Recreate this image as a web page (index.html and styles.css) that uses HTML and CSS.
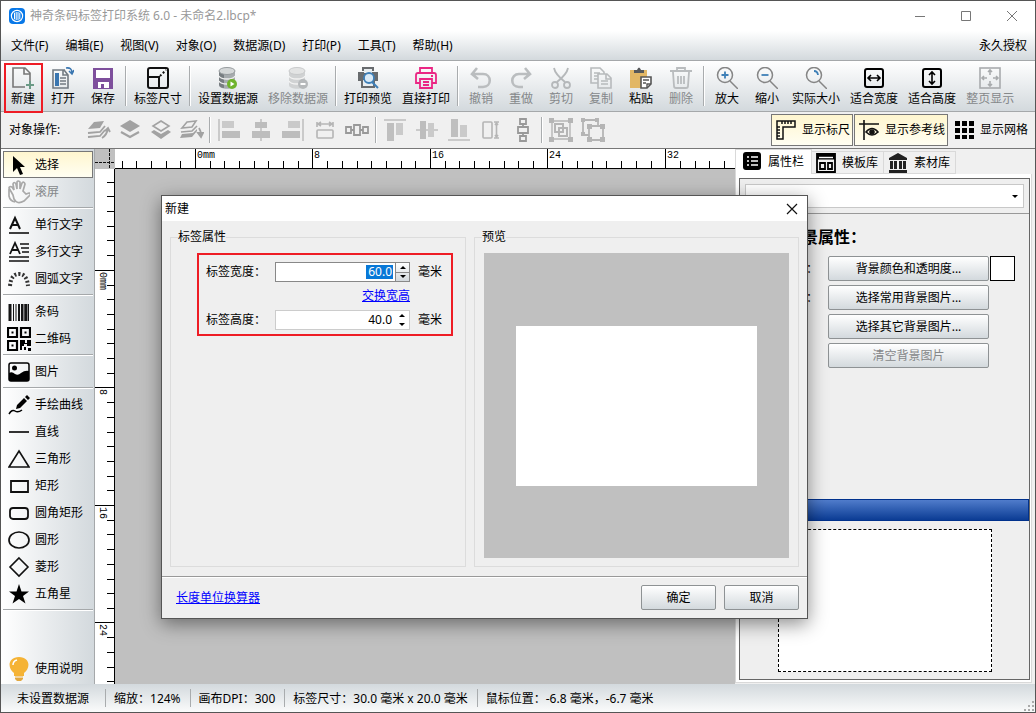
FILE: index.html
```html
<!DOCTYPE html>
<html lang="zh-CN">
<head>
<meta charset="utf-8">
<title>神奇条码标签打印系统 6.0</title>
<link rel="stylesheet" href="styles.css">
</head>
<body>
<div class="window">
  <header class="titlebar">
    <svg class="logo" width="16" height="16" viewBox="0 0 16 16"><rect width="16" height="16" rx="4" fill="#0878e8"/><circle cx="8" cy="8" r="5.6" fill="none" stroke="#fff" stroke-width="1.2"/><path d="M5.5 4.7v6.6M7.2 4v8M9 4v8M10.8 4.7v6.6" stroke="#fff"/></svg>
    <span class="title">神奇条码标签打印系统 6.0 - 未命名2.lbcp*</span>
    <div class="winbtns">
      <button aria-label="最小化"><svg width="12" height="12"><path d="M1 6.500h10" stroke="#777"/></svg></button>
      <button aria-label="最大化"><svg width="12" height="12"><path d="M1.500 1.500h9v9h-9z" stroke="#777" fill="none"/></svg></button>
      <button aria-label="关闭"><svg width="12" height="12"><path d="M1 1l10 10M11 1L1 11" stroke="#777"/></svg></button>
    </div>
  </header>
  <nav class="menubar">
    <button>文件(F)</button><button>编辑(E)</button><button>视图(V)</button><button>对象(O)</button><button>数据源(D)</button><button>打印(P)</button><button>工具(T)</button><button>帮助(H)</button>
    <span class="license">永久授权</span>
  </nav>
  <div class="toolbar">
    <button class="tool marked"><svg width="22" height="22" fill="none" stroke="#777" stroke-width="1.6"><path d="M13 20H1V1h12l5 5v8M12 1v6h6"/><path d="M18 14v8M14 18h8" stroke="#6b9a86" stroke-width="2"/></svg>新建</button>
    <button class="tool"><svg width="22" height="22" fill="none" stroke="#737b82" stroke-width="1.6"><path d="M13 3H1v18h15V8l-4-5M11 3v5h5"/><path d="M3 6h4v13H3z" fill="#3a76b0" stroke="none"/><path d="M8 11h6M8 14h6M8 17h6"/><path d="M14 1q6-1 6 5M17 4l3 3 2-4" stroke="#3a76b0"/></svg>打开</button>
    <button class="tool"><svg width="22" height="22"><path d="M1 1h20v21H1z" fill="#7e4f9c"/><path d="M4 3h14v8H4zM6 15h11v6h-5v-4H9v4H6z" fill="#fff"/></svg>保存</button>
    <i class="vsep"></i>
    <button class="tool"><svg width="22" height="22" fill="none" stroke="#111" stroke-width="2"><rect x="1" y="1" width="20" height="20" rx="2"/><path d="M1 10h11v11"/><path d="M13 9l6-6" stroke-dasharray="2 2"/></svg>标签尺寸</button>
    <i class="vsep"></i>
    <button class="tool"><svg width="22" height="22"><path d="M2 4v14c0 5 16 5 16 0V4z" fill="#a6abae"/><path d="M2 4v14q1 3 5 3V7z" fill="#777d81"/><ellipse cx="10" cy="4" rx="8" ry="3.500" fill="#d4d7d8" stroke="#969b9e"/><path d="M2 9c2 4 14 4 16 0M2 14c2 4 14 4 16 0" stroke="#eee" fill="none" stroke-width="1.300"/><circle cx="15" cy="17" r="5" fill="#6fb32c"/><path d="M13.500 14.500l4 2.500-4 2.500z" fill="#fff"/></svg>设置数据源</button>
    <button class="tool" disabled><svg width="22" height="22"><path d="M2 4v14c0 5 16 5 16 0V4z" fill="#d0d2d3"/><ellipse cx="10" cy="4" rx="8" ry="3.500" fill="#e3e4e4" stroke="#c8cacb"/><path d="M2 9c2 4 14 4 16 0M2 14c2 4 14 4 16 0" stroke="#f3f3f3" fill="none" stroke-width="1.300"/><circle cx="16" cy="17" r="5" fill="#b6b9bb"/><path d="M13.500 17h5" stroke="#fff" stroke-width="2"/></svg>移除数据源</button>
    <i class="vsep"></i>
    <button class="tool"><svg width="22" height="22"><path d="M5 0h12v4H5zM1 5h20v9h-3v7H4v-7H1z" fill="#686b6e"/><path d="M7 2h8v4H7zM6 13h10v6H6z" fill="#e9eef1"/><circle cx="12" cy="11" r="5" fill="#d9eaf7" stroke="#3e7fb7" stroke-width="1.800"/><path d="M15 15l6 6" stroke="#3e7fb7" stroke-width="2"/></svg>打印预览</button>
    <button class="tool"><svg width="22" height="22" fill="none" stroke="#ea2684" stroke-width="1.800"><path d="M5 6V1h12v5M5 16H1V8q0-2 2-2h16q2 0 2 2v8h-4M5 12h12v9H5zM8 15h6M8 18h6M16 9h2"/></svg>直接打印</button>
    <i class="vsep"></i>
    <button class="tool" disabled><svg width="22" height="22" fill="none" stroke="#babdbf" stroke-width="2.600"><path d="M7 1L2 7l6 5M2 7h11c9 0 9 13 0 13H8"/></svg>撤销</button>
    <button class="tool" disabled><svg width="22" height="22" fill="none" stroke="#babdbf" stroke-width="2.600"><path d="M15 1l5 6-6 5M20 7H9c-9 0-9 13 0 13h4"/></svg>重做</button>
    <button class="tool" disabled><svg width="22" height="22" fill="none" stroke="#b5b8ba" stroke-width="1.800"><circle cx="5" cy="18" r="3"/><circle cx="17" cy="18" r="3"/><path d="M4 1q1 6 11 14M18 1q-1 6-11 14"/></svg>剪切</button>
    <button class="tool" disabled><svg width="22" height="22" fill="none" stroke="#b7babc" stroke-width="1.600"><path d="M8 16H1V1h9l4 4v2M4 6h6M4 9h4M4 12h4M8 7h9l4 4v10H8zM16 7v5h5M11 14h7M11 17h7"/></svg>复制</button>
    <button class="tool"><svg width="22" height="22"><path d="M0 3h17v18H0z" fill="#e2b765"/><path d="M4 6V3h3q2-5 4 0h3v3z" fill="#56585a"/><path d="M11 10h10v7l-4 4h-6z" fill="#fff" stroke="#555" stroke-width="1.600"/><path d="M13 13h6M13 16h3M17 21v-4h4" stroke="#555" stroke-width="1.400" fill="none"/></svg>粘贴</button>
    <button class="tool" disabled><svg width="22" height="22" fill="none" stroke="#b9bcbe" stroke-width="1.800"><path d="M0 4h22M7 4V1h8v3M3 5l1 14q0 2 2 2h10q2 0 2-2l1-14M8 9v8M11 9v8M14 9v8"/></svg>删除</button>
    <i class="vsep"></i>
    <button class="tool"><svg width="22" height="22" fill="none" stroke="#858585" stroke-width="1.500"><circle cx="9" cy="8" r="7.500"/><path d="M14 14l8 8"/><path d="M9 4.500v7M5.500 8h7" stroke="#3e7fb7" stroke-width="1.800"/></svg>放大</button>
    <button class="tool"><svg width="22" height="22" fill="none" stroke="#858585" stroke-width="1.500"><circle cx="9" cy="8" r="7.500"/><path d="M14 14l8 8"/><path d="M5.500 8h7" stroke="#3e7fb7" stroke-width="1.800"/></svg>缩小</button>
    <button class="tool"><svg width="22" height="22" fill="none" stroke="#858585" stroke-width="1.500"><circle cx="9" cy="8" r="7.500"/><path d="M14 14l8 8"/><path d="M9 4q3.500 0 4 4" stroke="#3e7fb7" stroke-width="1.800"/></svg>实际大小</button>
    <button class="tool"><svg width="22" height="22" fill="none" stroke="#000" stroke-width="2"><rect x="2" y="2" width="18" height="18" rx="2"/><path d="M5 11h12M8 8l-3 3 3 3M14 8l3 3-3 3" stroke-width="1.600"/></svg>适合宽度</button>
    <button class="tool"><svg width="22" height="22" fill="none" stroke="#000" stroke-width="2"><rect x="2" y="2" width="18" height="18" rx="2"/><path d="M11 5v12M8 8l3-3 3 3M8 14l3 3 3-3" stroke-width="1.600"/></svg>适合高度</button>
    <button class="tool" disabled><svg width="22" height="22" fill="none" stroke="#a8abad" stroke-width="1.600"><rect x="1" y="1" width="20" height="20"/><path d="M11 3v5M11 14v5M3 11h5M14 11h5M9 5l2-2 2 2M9 17l2 2 2-2M5 9l-2 2 2 2M17 9l2 2-2 2"/></svg>整页显示</button>
  </div>
  <div class="objbar">
    <span class="objlabel">对象操作:</span>
    <div class="layers">
      <button class="op" aria-label="置顶"><svg width="24" height="20"><path d="M7 2l10-1-4 7-12 1z" fill="#a2a2a2"/><path d="M1 13l12-1 5-6M1 17l12-1 5-6M15 18q5-3 6-10M18 11l3-3 2 4" fill="none" stroke="#a2a2a2" stroke-width="1.800"/></svg></button>
      <button class="op" aria-label="上移"><svg width="20" height="20"><path d="M10 0l10 6-10 6L0 6z" fill="#a2a2a2"/><path d="M1 12l9 5 9-5" fill="none" stroke="#a2a2a2" stroke-width="2.200"/></svg></button>
      <button class="op" aria-label="下移"><svg width="20" height="20"><path d="M10 1l8 5-8 5-8-5z" fill="none" stroke="#a2a2a2" stroke-width="1.600"/><path d="M0 12l3-2 7 4 7-4 3 2-10 7z" fill="#a2a2a2"/></svg></button>
      <button class="op" aria-label="置底"><svg width="24" height="20"><path d="M7 2l9-1-4 6-10 1zM1 12l11-1 5-5" fill="none" stroke="#a2a2a2" stroke-width="1.600"/><path d="M2 14l11-1 4-4v2l-5 6-12 1z" fill="#a2a2a2"/><path d="M19 8q2 3 2 7M18 13l3 4 2-4z" fill="none" stroke="#a2a2a2" stroke-width="1.800"/></svg></button>
    </div>
    <i class="vsep"></i>
    <button class="op wide" aria-label="左对齐"><svg width="22" height="22" fill="#cacaca"><path d="M0 0h2v22H0zM4 2h12v7H4z"/><path d="M4 12h18v7H4z" fill="#bdbdbd"/></svg></button>
    <button class="op wide" aria-label="水平居中"><svg width="22" height="22" fill="#cacaca"><path d="M10 0h2v22h-2z"/><path d="M5 3h12v6H5zM2 12h18v7H2z" fill="#bdbdbd"/></svg></button>
    <button class="op wide" aria-label="右对齐"><svg width="22" height="22" fill="#cacaca"><path d="M20 0h2v22h-2zM6 2h12v7H6z"/><path d="M0 12h18v7H0z" fill="#bdbdbd"/></svg></button>
    <button class="op wide" aria-label="等宽"><svg width="22" height="22" fill="none" stroke="#b5b5b5" stroke-width="1.600"><path d="M3 3v5M19 3v5M4 5h14M7 3L4 5l3 2M15 3l3 2-3 2"/><rect x="3" y="11" width="16" height="8" rx="1"/></svg></button>
    <button class="op wide" aria-label="水平分布"><svg width="24" height="22" fill="none" stroke="#999" stroke-width="1.800"><path d="M1 8h5v6H1zM9 6h6v10H9zM18 8h5v6h-5zM6 11h3M15 11h3"/></svg></button>
    <i class="vsep"></i>
    <button class="op wide" aria-label="顶对齐"><svg width="22" height="22" fill="#cacaca"><path d="M0 0h22v2H0zM12 4h7v12h-7z"/><path d="M3 4h7v18H3z" fill="#bfbfbf"/></svg></button>
    <button class="op wide" aria-label="垂直居中"><svg width="22" height="22" fill="#cacaca"><path d="M0 10h22v2H0zM12 4h6v14h-6z"/><path d="M4 2h6v18H4z" fill="#bdbdbd"/></svg></button>
    <button class="op wide" aria-label="底对齐"><svg width="22" height="22" fill="#cacaca"><path d="M0 20h22v2H0zM12 6h7v12h-7z"/><path d="M3 0h7v18H3z" fill="#bfbfbf"/></svg></button>
    <button class="op wide" aria-label="等高"><svg width="22" height="22" fill="none" stroke="#b5b5b5" stroke-width="1.600"><rect x="3" y="3" width="9" height="16" rx="1"/><path d="M14 3h5M14 19h5M16.500 4v14M15 6l1.500-2L18 6M15 16l1.500 2 1.500-2"/></svg></button>
    <button class="op wide" aria-label="垂直分布"><svg width="22" height="24" fill="none" stroke="#999" stroke-width="1.800"><path d="M8 1h6v5H8zM6 9h10v6H6zM8 18h6v5H8zM11 6v3M11 15v3"/></svg></button>
    <i class="vsep"></i>
    <button class="op wide" aria-label="组合"><svg width="24" height="24" fill="none" stroke="#b5b5b5" stroke-width="2"><path d="M3 3h18v18H3z" stroke-width="1.400"/><path d="M6 6h8v8H6zM10 10h8v8h-8z"/><path d="M0 0h5v5H0zM19 0h5v5h-5zM0 19h5v5H0zM19 19h5v5h-5z" fill="#b5b5b5" stroke="none"/></svg></button>
    <button class="op wide" aria-label="取消组合"><svg width="24" height="24" fill="none" stroke="#b5b5b5" stroke-width="1.800"><path d="M2 2h15v6M2 2v15h6M8 8h14v14H8z"/><path d="M0 0h4v4H0zM14 0h4v4h-4zM0 14h4v4H0zM6 6h5v5H6zM19 6h5v5h-5zM6 19h5v5H6zM19 19h5v5h-5z" fill="#b5b5b5" stroke="none"/></svg></button>
    <div class="toggles">
      <button class="toggle on"><svg width="20" height="20" fill="none" stroke="#111" stroke-width="1.500"><path d="M1 1h18v6H7v12H1zM6 1v3M9 1v3M12 1v3M15 1v3M1 7h3M1 10h3M1 13h3M1 16h3"/></svg>显示标尺</button>
      <button class="toggle on"><svg width="20" height="20" fill="none" stroke="#111" stroke-width="1.600"><path d="M0 4h20M5 0v20"/><path d="M7 12q6-7 12 0-6 6-12 0z"/><circle cx="13" cy="12" r="2" fill="#111"/></svg>显示参考线</button>
      <button class="toggle"><svg width="20" height="20" fill="#000"><path d="M1 1h5v5H1zM8 1h5v5H8zM15 1h5v5h-5zM1 8h5v5H1zM8 8h5v5H8zM15 8h5v5h-5zM1 15h5v4H1zM8 15h5v4H8zM15 15h5v4h-5z"/></svg>显示网格</button>
    </div>
  </div>
  <main class="main">
    <aside class="side">
      <button class="item on"><svg width="22" height="22"><path d="M5 2v16l4-4 3 7 3-1-3-7h5z"/></svg>选择</button>
      <button class="item" disabled><svg width="22" height="24" fill="none" stroke="#a9a9a9" stroke-width="1.700"><path d="M5 15L1 8q0-2 3-1l2 3L5 4q1-3 3 0l1 5V2q1-2 3 0v7l2-6q2-2 3 1l-2 7 3 3 3-1q2 0 1 2l-6 6q-7 4-10-2zM1 9v7q1 5 6 6"/></svg>滚屏</button>
      <hr>
      <button class="item"><svg width="22" height="22" fill="none" stroke="#111"><path d="M2 15L7 4l5 11M4 11h6" stroke-width="2"/><path d="M1 19h20" stroke-width="1.600"/></svg>单行文字</button>
      <button class="item"><svg width="22" height="22" fill="none" stroke="#111"><path d="M2 13L7 2l5 11M4 9h6" stroke-width="1.800"/><path d="M12 3h9M13 7h8M14 11h7M1 16h20M1 20h20" stroke-width="1.600"/></svg>多行文字</button>
      <button class="item"><svg width="22" height="22" fill="none" stroke="#333" stroke-width="4"><path d="M2 18Q3 6 11 6t9 12" stroke-dasharray="2 2"/></svg>圆弧文字</button>
      <hr>
      <button class="item"><svg width="22" height="22" stroke="#151515"><path d="M2 3v17M18 3v17" stroke-width="3"/><path d="M5.500 3v17M8 3v17M16 3v17M20.500 3v17"/><path d="M11 3v17M14 3v17" stroke-width="2"/></svg>条码</button>
      <button class="item qr"><svg width="24" height="24" fill="none" stroke="#000" stroke-width="2.200"><path d="M1 1h9v9H1zM14 1h9v9h-9zM1 14h9v9H1z"/><path d="M4.500 4.500h2v2h-2zM17.500 4.500h2v2h-2zM4.500 17.500h2v2h-2zM13 13h5v3h2v-3h4v6h-4v-2h-3v2h-2v4h-2zM17 20h2v3h-2zM21 21h3v3h-3z" fill="#000" stroke="none"/></svg>二维码</button>
      <hr>
      <button class="item"><svg width="22" height="22"><rect x="1" y="2" width="20" height="18" rx="2" fill="none" stroke="#000" stroke-width="1.500"/><circle cx="6.500" cy="7" r="2.500"/><path d="M1 12q3-2 6 1 3 2 6-1 4-3 8-2v10H1z"/></svg>图片</button>
      <hr>
      <button class="item"><svg width="22" height="22"><path d="M9 11l7-7 3 3-7 7-4 1zM17 3l2-2 3 3-2 2z"/><path d="M1 20q3-5 6-3t7-1" fill="none" stroke="#000" stroke-width="1.500"/></svg>手绘曲线</button>
      <button class="item"><svg width="22" height="22"><path d="M1 11h20" stroke="#333" stroke-width="2"/></svg>直线</button>
      <button class="item"><svg width="22" height="22"><path d="M11 3l10 16H1z" fill="none" stroke="#111" stroke-width="1.600"/></svg>三角形</button>
      <button class="item"><svg width="22" height="22"><path d="M3 6h17v11H3z" fill="none" stroke="#111" stroke-width="1.800"/></svg>矩形</button>
      <button class="item"><svg width="22" height="22"><rect x="2" y="6" width="18" height="11" rx="3" fill="none" stroke="#111" stroke-width="1.800"/></svg>圆角矩形</button>
      <button class="item"><svg width="22" height="22"><ellipse cx="11" cy="11" rx="10" ry="8" fill="none" stroke="#111" stroke-width="1.700"/></svg>圆形</button>
      <button class="item"><svg width="22" height="22"><path d="M11 2l9 9-9 9-9-9z" fill="none" stroke="#111" stroke-width="1.600"/></svg>菱形</button>
      <button class="item"><svg width="22" height="22"><path d="M11 1l2.500 7.500H21l-6 4.500 2.500 7.500L11 16l-6.500 4.500L7 13 1 8.500h7.500z"/></svg>五角星</button>
      <hr>
      <button class="item help"><svg width="22" height="26"><path d="M11 1c11 0 12 11 5 16v3H6v-3C-1 12 0 1 11 1z" fill="#f5b335"/><path d="M7 20h8v3l-2 2H9l-2-2z" fill="#e2a83f"/><path d="M7 21h8" stroke="#fff"/><path d="M5 9q0-4 4-5" stroke="#fff" stroke-width="1.500" fill="none"/></svg>使用说明</button>
    </aside>
    <section class="work">
      <svg class="corner" width="20" height="20"><path d="M14.500 0v20M0 13.500h20" stroke="#111" stroke-dasharray="3 1"/></svg>
      <svg class="ruler-h" height="20" width="100%">
        <path d="M7.500 12v8M21.500 12v8M36.500 12v8M51.500 12v8M65.500 12v8M80.500 0v20M95.500 12v8M109.500 12v8M124.500 12v8M139.500 12v8M153.500 12v8M168.500 12v8M183.500 12v8M197.500 0v20M212.500 12v8M227.500 12v8M242.500 12v8M256.500 12v8M271.500 12v8M286.500 12v8M300.500 12v8M315.500 0v20M330.500 12v8M344.500 12v8M359.500 12v8M374.500 12v8M389.500 12v8M403.500 12v8M418.500 12v8M432.500 0v20M447.500 12v8M462.500 12v8M477.500 12v8M491.500 12v8M506.500 12v8M521.500 12v8M536.500 12v8M550.500 0v20M565.500 12v8M580.500 12v8M594.500 12v8M609.500 12v8" stroke="#000"/>
        <text x="82" y="9">0mm</text><text x="199" y="9">8</text><text x="317" y="9">16</text><text x="434" y="9">24</text><text x="552" y="9">32</text>
      </svg>
      <svg class="ruler-v" width="20" height="100%">
        <path d="M12 13.500h8M12 27.500h8M12 42.500h8M12 57.500h8M12 71.500h8M12 86.500h8M0 101.500h20M12 116.500h8M12 130.500h8M12 145.500h8M12 160.500h8M12 174.500h8M12 189.500h8M12 204.500h8M0 218.500h20M12 233.500h8M12 248.500h8M12 263.500h8M12 277.500h8M12 292.500h8M12 307.500h8M12 321.500h8M0 336.500h20M12 351.500h8M12 365.500h8M12 380.500h8M12 395.500h8M12 410.500h8M12 424.500h8M12 439.500h8M0 453.500h20M12 468.500h8M12 483.500h8M12 498.500h8M12 512.500h8" stroke="#000"/>
        <text transform="translate(5 103) rotate(90)">0mm</text><text transform="translate(5 220) rotate(90)">8</text><text transform="translate(5 338) rotate(90)">16</text><text transform="translate(5 455) rotate(90)">24</text>
      </svg>
      <div class="canvas"></div>
    </section>
    <aside class="panel">
      <div class="tabs">
        <button class="tab active"><svg width="20" height="20"><rect x="1" y="0" width="18" height="18" rx="3"/><path d="M5 5h2M9 5h7M5 9h2M9 9h7M5 13h2M9 13h7" stroke="#fff" stroke-width="1.600"/></svg>属性栏</button>
        <button class="tab"><svg width="20" height="20" fill="none" stroke="#000" stroke-width="1.800"><path d="M1 1h18v18H1zM4 10h5v6H4zM12 10h4v6h-4z"/><path d="M1 4h18" stroke-width="5"/><path d="M3 4.500h14" stroke="#fff" stroke-width="1.400"/></svg>模板库</button>
        <button class="tab"><svg width="20" height="20" fill="#222"><path d="M10 0l9 5v2H1V5zM2 8h3v8H2zM6 8h3v8H6zM11 8h3v8h-3zM15 8h3v8h-3zM1 17h18v3H1z"/></svg>素材库</button>
      </div>
      <div class="panelbody">
        <div class="frame">
          <div class="selwrap"><select class="objsel" aria-label="对象"><option></option></select></div>
          <h2>背景属性：</h2>
          <div class="props">
            <span>背景色：</span><div class="withswatch"><button class="btn">背景颜色和透明度...</button><i class="swatch"></i></div>
            <span>背景图片：</span><div><button class="btn">选择常用背景图片...</button></div>
            <span></span><div><button class="btn">选择其它背景图片...</button></div>
            <span></span><div><button class="btn" disabled>清空背景图片</button></div>
          </div>
          <div class="bluebar"></div>
          <div class="thumb"></div>
        </div>
      </div>
    </aside>
  </main>
  <footer class="status">
    <span class="cell first">未设置数据源</span><span class="cell">缩放：124%</span><span class="cell">画布DPI：300</span><span class="cell">标签尺寸：30.0 毫米 x 20.0 毫米</span><span class="cell">鼠标位置：-6.8 毫米，-6.7 毫米</span>
    <svg class="grip" width="11" height="11" fill="#aaa"><path d="M8 0h2v2H8zM4 4h2v2H4zM8 4h2v2H8zM0 8h2v2H0zM4 8h2v2H4zM8 8h2v2H8z"/></svg>
  </footer>

  <div class="dialog" role="dialog" aria-labelledby="dlg-title">
    <div class="dlghead"><span id="dlg-title">新建</span><button aria-label="关闭"><svg width="12" height="12"><path d="M1 1l10 10M11 1L1 11" stroke="#111" stroke-width="1.200"/></svg></button></div>
    <div class="dlgbody">
      <fieldset class="attrs"><legend>标签属性</legend>
        <div class="redbox">
          <label for="w">标签宽度：</label>
          <div class="spin focus"><input id="w" class="sel" value="60.0"><span class="arrows"><button aria-label="增加宽度"></button><button aria-label="减少宽度"></button></span></div>
          <span>毫米</span>
          <a href="#" class="swap">交换宽高</a>
          <label for="h">标签高度：</label>
          <div class="spin"><input id="h" value="40.0"><span class="arrows"><button aria-label="增加高度"></button><button aria-label="减少高度"></button></span></div>
          <span>毫米</span>
        </div>
      </fieldset>
      <fieldset class="prev"><legend>预览</legend><div class="stage"><div class="sheet"></div></div></fieldset>
    </div>
    <div class="dlgfoot"><a href="#">长度单位换算器</a><button class="btn">确定</button><button class="btn">取消</button></div>
  </div>
</div>
</body>
</html>
```
FILE: styles.css
```css
* { box-sizing: border-box; }
body { margin: 0; color: #000; font: 12px/16px "Noto Sans", "Noto Sans CJK SC", sans-serif; }
button { margin: 0; padding: 0; border: 0; background: none; color: inherit; font: inherit; white-space: nowrap; }
svg { display: block; flex: none; }
a { color: #00f; text-decoration: underline; }
.window { position: relative; display: flex; flex-direction: column; min-height: 100vh; border: 1px solid #555; background: #f0f0f0; }

.titlebar { display: flex; align-items: center; height: 30px; padding-left: 8px; background: #fff; color: #999; }
.title { margin-left: 5px; flex: 1; }
.winbtns { display: flex; }
.winbtns button { display: grid; place-items: center; width: 46px; height: 30px; }
.menubar { display: flex; align-items: center; gap: 17px; height: 30px; padding: 0 8px 0 10px; border-bottom: 1px solid #a5a8aa; background: linear-gradient(#fff, #d3d9dd); }
.license { margin-left: auto; }
.toolbar { display: flex; height: 51px; padding-left: 2px; border-bottom: 1px solid #a5a8aa; background: linear-gradient(#fff, #d3d9dd); }
.tool { position: relative; display: flex; flex-direction: column; align-items: center; min-width: 40px; padding: 6px 5px 0; line-height: 20px; }
.tool:disabled { color: #85888a; }
.marked::after { content: ""; position: absolute; inset: 2px 0 -2px 1px; border: 2px solid #ee1c25; }
.vsep { flex: none; width: 6px; margin: 5px 0; background: linear-gradient(#a9acae, #a9acae) 2px 0 / 1px 100% no-repeat, linear-gradient(#fff, #fff) 3px 0 / 1px 100% no-repeat; }

.objbar { display: flex; height: 37px; border-bottom: 1px solid #777; }
.objlabel { align-self: center; width: 74px; padding-left: 8px; }
.layers { display: flex; margin-left: 8px; }
.op { display: grid; place-items: center; width: 31px; }
.wide { width: 32px; }
.toggles { display: flex; gap: 1px; margin-left: auto; padding: 2px 6px 2px 0; }
.toggle { display: flex; align-items: center; gap: 6px; padding: 0 2px 0 4px; border: 1px solid transparent; }
.toggle:last-child { padding: 0 0 0 4px; }
.toggle.on { border-color: #777; background: linear-gradient(#fff6cf, #fffef2); }

.main { display: flex; flex: 1; min-height: 0; }
.side { display: flex; flex-direction: column; width: 94px; padding: 2px 1px 2px 2px; border-right: 1px solid #a5a8aa; background: linear-gradient(90deg, #fff, #d3d9dd); }
.side hr { width: 100%; height: 6px; margin: 0; border: 0; background: linear-gradient(#a5a8aa, #a5a8aa) 0 2px / 100% 1px no-repeat, linear-gradient(#fff, #fff) 0 3px / 100% 1px no-repeat; }
.item { display: flex; align-items: center; gap: 5px; height: 27px; padding-left: 5px; }
.item.on { padding-left: 4px; border: 1px solid #777; background: linear-gradient(#fff6cf, #fffef2); }
.item.qr { gap: 4px; padding-left: 4px; }
.item:disabled { color: #85888a; }
.help { margin-top: auto; }
.work { display: grid; flex: 1; min-width: 0; grid-template: 20px 1fr / 20px 1fr; }
.corner { background: #c0c0c0; }
.ruler-h { background: #fff; border-bottom: 1px solid #000; }
.ruler-v { background: #fff; border-right: 1px solid #000; height: 100%; }
.ruler-h text, .ruler-v text { font: 10px "Liberation Mono", monospace; }
.canvas { background: #c0c0c0; }

.panel { display: flex; flex-direction: column; width: 300px; padding: 0 3px 1px 0; }
.tabs { display: flex; align-items: flex-end; height: 25px; }
.tab { display: flex; align-items: center; gap: 6px; height: 23px; padding: 0 5px 0 4px; border: 1px solid #d9d9d9; border-left: 0; }
.tab.active { height: 25px; padding: 0 7px 0 6px; border: 1px solid #d9d9d9; border-bottom: 0; background: #fff; }
.panelbody { display: flex; flex: 1; padding: 4px 1px 2px 3px; border: 1px solid #d9d9d9; border-top: 0; background: #fff; }
.frame { display: flex; flex-direction: column; flex: 1; border: 1px solid #666; background: #efefef; }
.selwrap { display: grid; align-items: center; padding: 5px; border-bottom: 1px solid #999; }
.selwrap > *, .selwrap::after { grid-area: 1 / 1; }
.objsel { width: 100%; height: 24px; border: 1px solid #c8c8c8; appearance: none; background: #fff; }
.selwrap::after { content: ""; justify-self: end; margin-right: 6px; border: 3px solid transparent; border-top-color: #000; border-bottom: 0; pointer-events: none; }
.frame h2 { margin: 11px 0 7px 46px; font-size: 16px; line-height: 24px; }
.props { display: grid; grid-template-columns: 78px 1fr; gap: 4px 10px; align-items: center; text-align: right; }
.props > div { display: flex; gap: 1px; }
.btn { height: 25px; border: 1px solid #8e9294; border-radius: 2px; background: linear-gradient(#fff, #d3d9dd); }
.props .btn { width: 161px; }
.btn:disabled { color: #858789; }
.swatch { width: 25px; height: 25px; border: 1px solid #000; background: #fff; }
.bluebar { height: 22px; margin-top: auto; border: 1px solid #00318c; background: linear-gradient(#507ccb, #0b3c94); }
.thumb { width: 214px; height: 143px; margin: 8px auto 7px 38px; border: 1px dashed #000; background: #fff; }

.status { display: flex; align-items: center; height: 28px; background: linear-gradient(#d3d9dd, #fafbfb); }
.cell { padding: 2px 9px 0 8px; border-left: 1px solid #a9acae; }
.first { padding: 2px 16px 0; border: 0; }
.grip { align-self: flex-end; margin-left: auto; }

.dialog { position: absolute; left: 160px; top: 194px; width: 647px; border: 1px solid #555; background: #efefef; box-shadow: 0 5px 18px rgba(0, 0, 0, .45); }
.dlghead { display: flex; align-items: center; justify-content: space-between; height: 25px; padding: 0 9px 0 3px; background: #fff; }
.dlgbody { display: grid; grid-template-columns: 296px 325px; gap: 8px; padding: 8px 8px 9px; border-bottom: 1px solid #999; }
fieldset { min-width: 0; margin: 0; padding: 0; border: 1px solid #dcdcdc; }
legend { margin-left: 7px; padding: 0; }
.redbox { display: grid; grid-template-columns: 69px 135px 1fr; align-items: center; width: 256px; margin: 8px 0 0 26px; padding: 7px 0 4px 7px; border: 2px solid #ee1c25; row-gap: 6px; }
.redbox > span { padding-left: 8px; }
.swap { grid-column: 2 / 4; padding-left: 87px; }
.spin { display: flex; height: 20px; border: 1px solid #ccc; background: #fff; }
.spin.focus { border-color: #888; }
.spin input { flex: 1; min-width: 0; padding: 0 3px 0 0; border: 0; outline: 0; background: none; color: #000; font: inherit; text-align: right; }
.spin input.sel { color: #fff; background: linear-gradient(#0878d7, #0878d7) right 2px center / 27px 14px no-repeat; }
.arrows { display: grid; width: 14px; }
.focus .arrows { border-left: 1px solid #888; background: linear-gradient(#fff, #d3d9dd); }
.arrows button { display: grid; place-items: center; }
.focus .arrows button + button { border-top: 1px solid #888; }
.arrows button::before { content: ""; border: 3px solid transparent; border-bottom-color: #000; border-top: 0; }
.arrows button + button::before { border: 3px solid transparent; border-top-color: #000; border-bottom: 0; }
.prev .stage { display: grid; place-items: center; height: 305px; margin: 8px 9px; background: #c0c0c0; }
.sheet { width: 241px; height: 160px; background: #fff; }
.dlgfoot { display: flex; align-items: center; gap: 8px; padding: 7px 8px 8px 14px; border-top: 1px solid #fff; }
.dlgfoot a { margin-right: auto; }
.dlgfoot .btn { width: 75px; }
```
